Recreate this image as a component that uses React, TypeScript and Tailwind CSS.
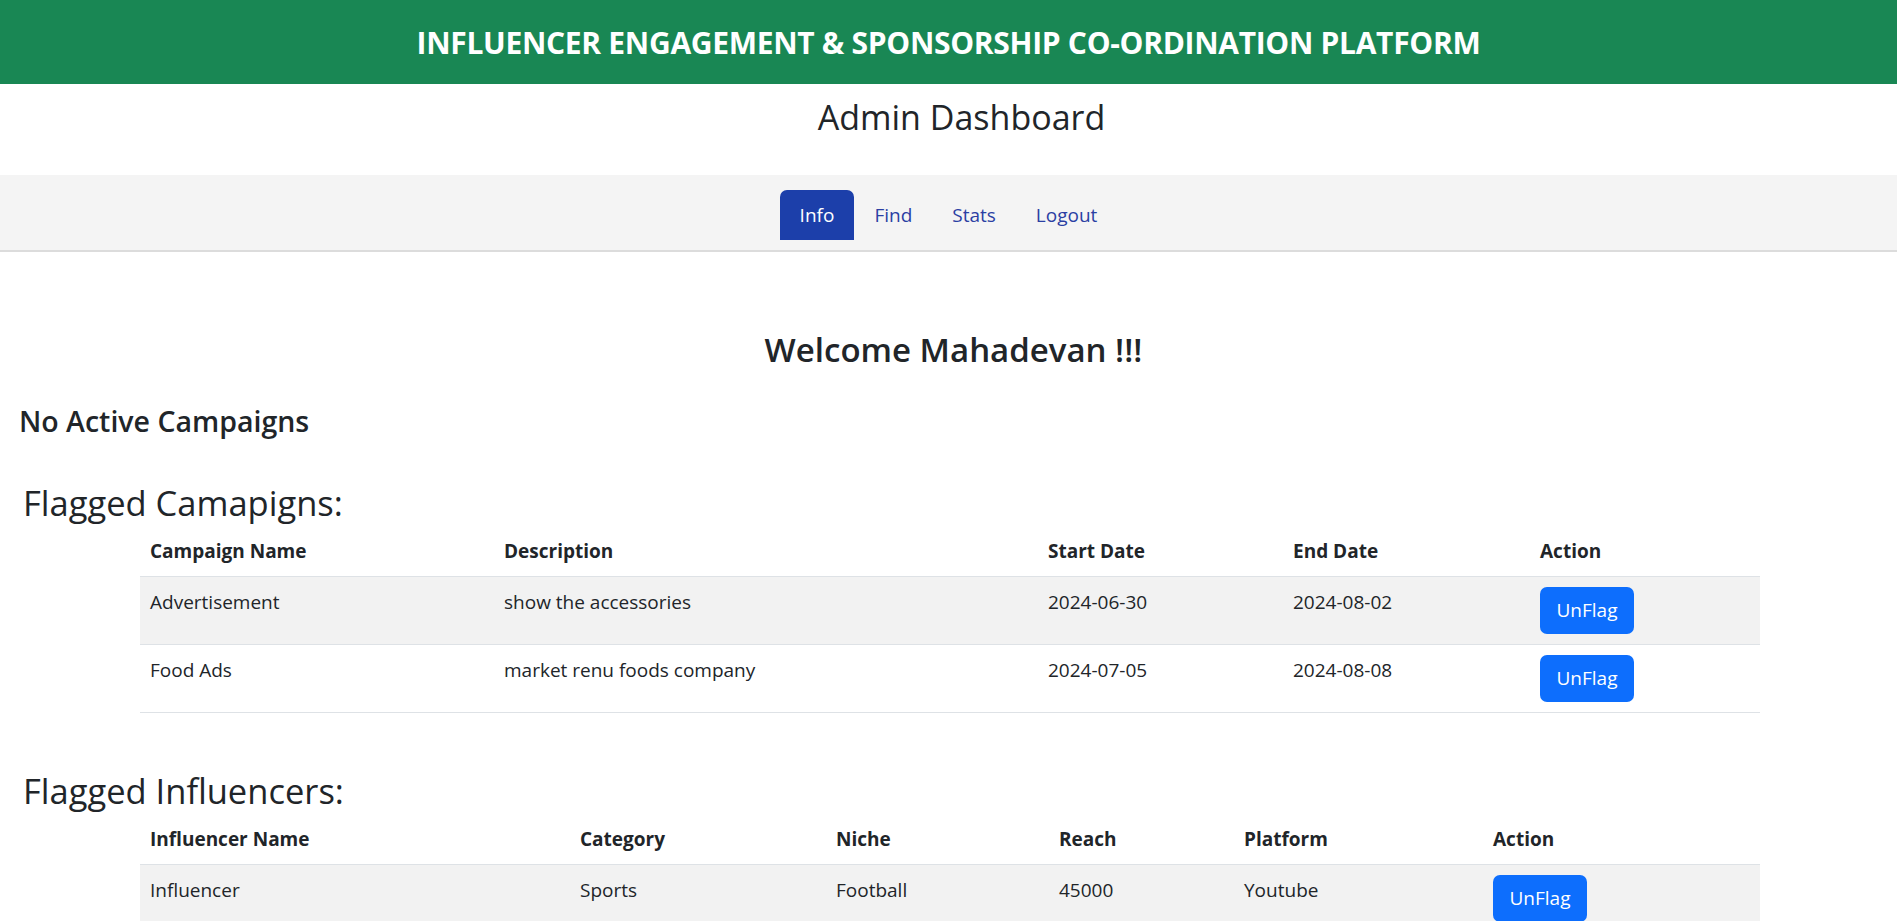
import React from 'react';

const campaigns = [
  { name: 'Advertisement', description: 'show the accessories', start: '2024-06-30', end: '2024-08-02' },
  { name: 'Food Ads', description: 'market renu foods company', start: '2024-07-05', end: '2024-08-08' },
];

const influencers = [
  { name: 'Influencer', category: 'Sports', niche: 'Football', reach: '45000', platform: 'Youtube' },
];

const UnFlagButton: React.FC = () => (
  <button className="h-[47px] w-[94px] rounded-[7px] bg-[#0d6efd] text-[19px] text-white">UnFlag</button>
);

const App: React.FC = () => {
  return (
    <div className="min-h-screen bg-white text-[#212529] font-['Open_Sans',sans-serif]">
      {/* Header */}
      <div className="flex h-[84px] items-center justify-center bg-[#198754]">
        <h1 className="text-[30px] font-bold tracking-[-0.3px] text-white">
          INFLUENCER ENGAGEMENT &amp; SPONSORSHIP CO-ORDINATION PLATFORM
        </h1>
      </div>

      <div className="h-[91px] pt-[9px] pl-[26px] text-center">
        <h2 className="text-[34px] leading-[48px] font-medium">Admin Dashboard</h2>
      </div>

      {/* Nav */}
      <div className="flex h-[77px] justify-center border-b-2 border-[#dcdcdc] bg-[#f4f4f4] pt-[15px]">
        <nav className="flex h-[50px] items-center text-[19px]">
          <a className="flex h-full items-center rounded-t-[7px] bg-[#1c3faa] px-5 text-white">Info</a>
          <a className="flex h-full items-center px-5 text-[#2b3fa3]">Find</a>
          <a className="flex h-full items-center px-5 text-[#2b3fa3]">Stats</a>
          <a className="flex h-full items-center px-5 text-[#2b3fa3]">Logout</a>
        </nav>
      </div>

      <h2 className="mt-[74px] pl-[10px] text-center text-[33px] leading-[48px] font-semibold">Welcome Mahadevan !!!</h2>

      <h3 className="mt-[29px] pl-[19px] text-[28.5px] leading-[36px] font-semibold">No Active Campaigns</h3>

      <h3 className="mt-[41px] pl-[23px] text-[34.5px] leading-[46px]">Flagged Camapigns:</h3>
      <div className="px-[140px] pr-[137px]">
        <table className="w-full table-fixed border-collapse text-[19px]">
          <thead>
            <tr className="border-b border-[#dee2e6] text-left">
              <th className="w-[354px] px-[10px] py-[10px] leading-[30px] font-bold">Campaign Name</th>
              <th className="w-[544px] px-[10px] py-[10px] leading-[30px] font-bold">Description</th>
              <th className="w-[245px] px-[10px] py-[10px] leading-[30px] font-bold">Start Date</th>
              <th className="w-[247px] px-[10px] py-[10px] leading-[30px] font-bold">End Date</th>
              <th className="px-[10px] py-[10px] leading-[30px] font-bold">Action</th>
            </tr>
          </thead>
          <tbody>
            {campaigns.map((c, i) => (
              <tr key={c.name} className={`border-b border-[#dee2e6] align-top ${i % 2 === 0 ? 'bg-[#f2f2f2]' : 'bg-white'}`}>
                <td className="px-[10px] py-[10px] leading-[30px]">{c.name}</td>
                <td className="px-[10px] py-[10px] leading-[30px]">{c.description}</td>
                <td className="px-[10px] py-[10px] leading-[30px]">{c.start}</td>
                <td className="px-[10px] py-[10px] leading-[30px]">{c.end}</td>
                <td className="px-[10px] py-[10px]">
                  <UnFlagButton />
                </td>
              </tr>
            ))}
          </tbody>
        </table>
      </div>

      <h3 className="mt-[55px] pl-[23px] text-[34.5px] leading-[46px]">Flagged Influencers:</h3>
      <div className="px-[140px] pr-[137px]">
        <table className="w-full table-fixed border-collapse text-[19px]">
          <thead>
            <tr className="border-b border-[#dee2e6] text-left">
              <th className="w-[430px] px-[10px] py-[10px] leading-[30px] font-bold">Influencer Name</th>
              <th className="w-[256px] px-[10px] py-[10px] leading-[30px] font-bold">Category</th>
              <th className="w-[223px] px-[10px] py-[10px] leading-[30px] font-bold">Niche</th>
              <th className="w-[185px] px-[10px] py-[10px] leading-[30px] font-bold">Reach</th>
              <th className="w-[249px] px-[10px] py-[10px] leading-[30px] font-bold">Platform</th>
              <th className="px-[10px] py-[10px] leading-[30px] font-bold">Action</th>
            </tr>
          </thead>
          <tbody>
            {influencers.map((f, i) => (
              <tr key={f.name} className={`border-b border-[#dee2e6] align-top ${i % 2 === 0 ? 'bg-[#f2f2f2]' : 'bg-white'}`}>
                <td className="px-[10px] py-[10px] leading-[30px]">{f.name}</td>
                <td className="px-[10px] py-[10px] leading-[30px]">{f.category}</td>
                <td className="px-[10px] py-[10px] leading-[30px]">{f.niche}</td>
                <td className="px-[10px] py-[10px] leading-[30px]">{f.reach}</td>
                <td className="px-[10px] py-[10px] leading-[30px]">{f.platform}</td>
                <td className="px-[10px] py-[10px]">
                  <UnFlagButton />
                </td>
              </tr>
            ))}
          </tbody>
        </table>
      </div>
    </div>
  );
};

export default App;
